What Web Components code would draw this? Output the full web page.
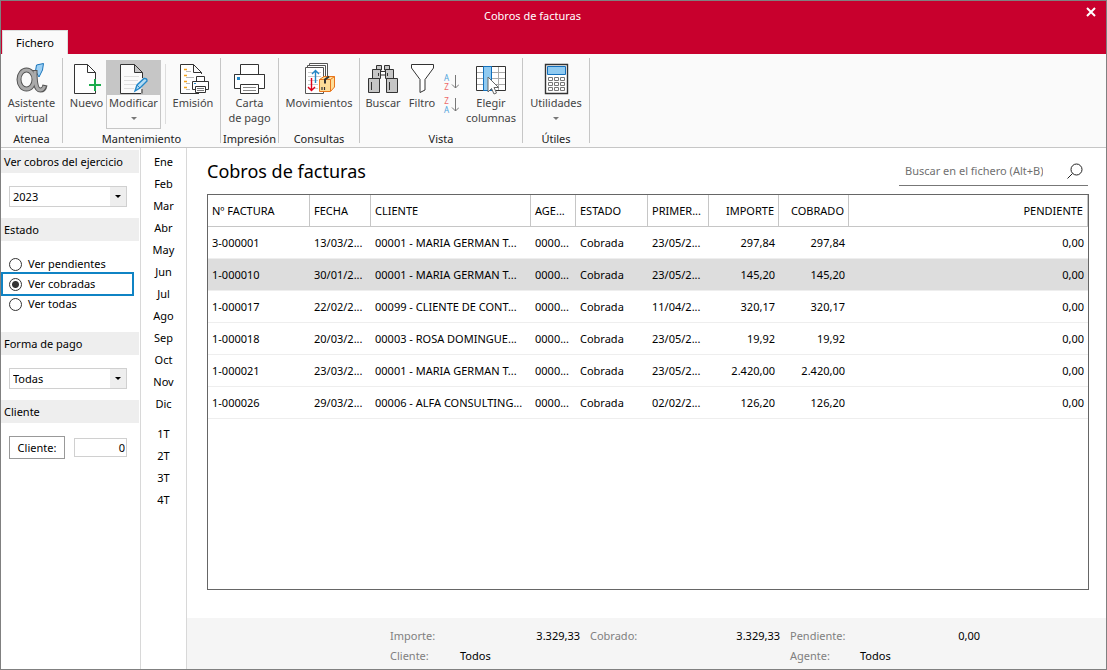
<!DOCTYPE html>
<html lang="es">
<head>
<meta charset="utf-8">
<title>Cobros de facturas</title>
<style>
  html, body { margin: 0; min-height: 100%; }
  body { font: 11px/16px "Noto Sans", "Open Sans", sans-serif; color: #000; background: #fff; }
</style>
</head>
<body>
<app-window>
  <title-bar slot="top" heading="Cobros de facturas"></title-bar>
  <tool-ribbon slot="top">
    <ribbon-group label="Atenea" style="--w: 61px">
      <ribbon-button icon="alpha" style="--w: 61px">Asistente<br>virtual</ribbon-button>
    </ribbon-group>
    <ribbon-group label="Mantenimiento" style="--w: 157px; --align: end">
      <ribbon-button icon="new" style="--w: 39px">Nuevo</ribbon-button>
      <ribbon-button icon="edit" style="--w: 55px" active menu>Modificar</ribbon-button>
      <ribbon-divider></ribbon-divider>
      <ribbon-button icon="issue" style="--w: 54px">Emisión</ribbon-button>
    </ribbon-group>
    <ribbon-group label="Impresión" style="--w: 57px">
      <ribbon-button icon="print" style="--w: 57px">Carta<br>de pago</ribbon-button>
    </ribbon-group>
    <ribbon-group label="Consultas" style="--w: 80px">
      <ribbon-button icon="moves" style="--w: 80px">Movimientos</ribbon-button>
    </ribbon-group>
    <ribbon-group label="Vista" style="--w: 162px">
      <ribbon-button icon="find" style="--w: 46px">Buscar</ribbon-button>
      <ribbon-button icon="filter" style="--w: 32px">Filtro</ribbon-button>
      <sort-buttons></sort-buttons>
      <ribbon-button icon="columns" style="--w: 54px">Elegir<br>columnas</ribbon-button>
    </ribbon-group>
    <ribbon-group label="Útiles" style="--w: 66px">
      <ribbon-button icon="calc" style="--w: 66px" menu>Utilidades</ribbon-button>
    </ribbon-group>
  </tool-ribbon>
  <filter-panel slot="body"></filter-panel>
  <period-list slot="body"></period-list>
  <invoice-view slot="body"></invoice-view>
</app-window>

<script>
const ICONS = {
  alpha: `<path d="M21.500 3L28.500 1.500L27.500 8L24 15L20.500 9Z" fill="#9cd0f5" stroke="#1a75bb"/><g fill="none"><ellipse cx="11.500" cy="17.500" rx="7.500" ry="9.500" stroke="#555" stroke-width="5"/><path d="M20 8C20 18 20 28 25.500 28C28.500 28 29.500 26 30 23" stroke="#555" stroke-width="5"/><ellipse cx="11.500" cy="17.500" rx="7.500" ry="9.500" stroke="#aaa" stroke-width="3"/><path d="M20 9C20 18 20 28 25.500 28C28.500 28 29 26 29.500 24" stroke="#aaa" stroke-width="3"/></g>`,
  new: `<path d="M25.500 18V10.500L17.500 2.500H4.500V31.500H25.500V29M17.500 2.500V10.500H25.500" fill="#fff" stroke="#333"/><path d="M25 17V29M19 23H31" stroke="#1aab4b" stroke-width="2" fill="none"/>`,
  edit: `<path d="M24 31.500H3.500V2.500H17.500L25.500 10.500V16M17.500 2.500V10.500H25.500M25 27V31.500" fill="#fafafa" stroke="#333"/><path d="M7 14.500H22M7 18.500H21M7 22.500H19M7 26.500H17" stroke="#ddd"/><path d="M18 29L20 23L27 16.500Q30 16 30 19L23 26Z" fill="#b5dcf4" stroke="#2387c8" stroke-width="1.400"/><path d="M20 23L23 26" stroke="#2387c8"/>`,
  issue: `<path d="M22 31.500H3.500V2.500H16.500L24.500 10.500V12M16.500 2.500V10.500H24.500" fill="#fff" stroke="#333"/><path d="M7 7.500H10M7 13.500H10M7 19.500H10M7 25.500H10" stroke="#f5a21b" stroke-width="1.500"/><path d="M9 9.500H14M9 15.500H17M9 21.500H13M9 27.500H13" stroke="#bbb"/><path d="M19.500 19V14.500H27.500V19M19.500 27.500H15.500V19.500H31.500V27.500H27.500" fill="#fff" stroke="#333"/><path d="M18.500 24.500H28.500V30.500H18.500Z" fill="#fff" stroke="#333"/><path d="M20 26.500H27M20 28.500H27" stroke="#777"/><path d="M17 21.500H19" stroke="#2387c8"/>`,
  print: `<path d="M7.500 12.500V2.500H25.500V12.500M7.500 26.500H1.500V12.500H31.500V26.500H25.500" fill="#fff" stroke="#333"/><path d="M1.500 12.500H31.500M7.500 22.500H25.500V31.500H7.500Z" fill="#fff" stroke="#333"/><path d="M10 25.500H23M10 28.500H23" stroke="#888"/><path d="M4 15H7V18H4Z" fill="#2387c8"/>`,
  moves: `<path d="M6.500 1.500H24.500V20H6.500Z" fill="#fff" stroke="#555"/><path d="M4.500 3.500H22.500V25H4.500Z" fill="#fff" stroke="#555"/><path d="M2.500 5.500H20.500V31.500H2.500Z" fill="#fff" stroke="#555"/><path d="M5 10.500H18M5 14.500H18M5 18.500H15M5 22.500H15M5 26.500H15" stroke="#ccc"/><path d="M12.500 21V9M9 12L12.500 8.500L16 12" fill="none" stroke="#2387c8" stroke-width="1.400"/><path d="M8.500 16V28M5 25L8.500 28.500L12 25" fill="none" stroke="#e2001a" stroke-width="1.400"/><path d="M16.500 17.500L21 14.500H31.500V25L27.500 29.500H16.500Z" fill="#fddd98" stroke="#e8751a"/><path d="M16.500 17.500H27.500V29M27.500 17.500L31.500 14.500" fill="none" stroke="#e8751a"/><path d="M22 21.500V17.500L26 14.500" stroke="#333" fill="none" stroke-width="2"/><path d="M19 25V28M21.500 25V28" stroke="#333" stroke-width="1.200"/>`,
  find: `<g fill="#c6c6c6" stroke="#333"><path d="M9.500 3.500H14.500V8H9.500ZM17.500 3.500H22.500V8H17.500Z"/><path d="M13.500 9.500H18.500V13H13.500Z" fill="#fff"/><path d="M5.500 7.500H13.500V16.500H5.500ZM18.500 7.500H26.500V16.500H18.500Z"/><path d="M1.500 16.500H12.500V30.500H1.500ZM19.500 16.500H30.500V30.500H19.500Z"/><path d="M4.500 20V28M22.500 20V28M11.500 11V14M20.500 11V14"/></g>`,
  filter: `<path d="M5.500 2.500H27.500V6L19 17.500V28L14 30.500V17.500L5.500 6Z" fill="#fff" stroke="#333"/>`,
  columns: `<path d="M1.500 4.500H30.500V28.500H1.500Z" fill="#fff" stroke="#333"/><path d="M2 10.500H30M2 16.500H30M2 22.500H30M23.500 5V28" stroke="#aaa"/><path d="M8.500 4.500H16.500V28.500H8.500Z" fill="#90caf0" stroke="#1370bd"/><path d="M13 15V30L16.500 26.500L19 32L21.500 31L19 25.500H23.500Z" fill="#fff" stroke="#666"/>`,
  calc: `<path d="M5.500 2.500H27.500V31.500H5.500Z" fill="#fff" stroke="#333" stroke-width="1.400"/><path d="M7.500 4.500H25.500V12.500H7.500Z" fill="#90caf0" stroke="#1370bd"/><path d="M8.500 15.500H12.500V18.500H8.500ZM14.500 15.500H18.500V18.500H14.500ZM20.500 15.500H24.500V18.500H20.500ZM8.500 20.500H12.500V23.500H8.500ZM14.500 20.500H18.500V23.500H14.500ZM20.500 20.500H24.500V23.500H20.500ZM8.500 25.500H12.500V28.500H8.500ZM14.500 25.500H18.500V28.500H14.500ZM20.500 25.500H24.500V28.500H20.500Z" fill="#fff" stroke="#777"/>`
};

const define = (name, render) => customElements.define(name, class extends HTMLElement {
  connectedCallback() {
    if (this.shadowRoot) return;
    this.attachShadow({ mode: "open" }).innerHTML =
      `<style>*{box-sizing:border-box}button,input,select{font:inherit;color:inherit;margin:0;border-radius:0}</style>` + render(this);
  }
});

define("app-window", () => `
  <style>
    :host { display: flex; flex-direction: column; box-sizing: border-box; min-height: 100vh; border: 1px solid #808080; }
    .body { display: flex; flex: 1; }
  </style>
  <slot name="top"></slot>
  <div class="body"><slot name="body"></slot></div>`);

define("title-bar", el => `
  <style>
    :host { display: grid; grid-template-rows: 29px 24px; background: #c8002d; color: #fff; }
    .bar { display: grid; grid-template-columns: 40px 1fr 82px; }
    h1 { grid-column: 2; margin: 0; font-size: 11px; font-weight: 400; line-height: 30px; text-align: center; }
    .close { justify-self: end; width: 30px; height: 22px; padding: 0; border: 0; background: none; }
    svg { display: block; margin: auto; }
    nav { display: flex; padding-left: 1px; }
    .tab { width: 66px; padding: 0; border: 1px solid #ddd; border-bottom: 0; background: #fafafa; color: #000; line-height: 24px; text-align: center; }
  </style>
  <div class="bar">
    <h1>${el.getAttribute("heading")}</h1>
    <button class="close" aria-label="Cerrar"><svg width="10" height="10"><path d="M1 1L9 9M9 1L1 9" stroke="#fff" stroke-width="2"/></svg></button>
  </div>
  <nav><button class="tab">Fichero</button></nav>`);

define("tool-ribbon", () => `
  <style>:host { display: flex; height: 94px; box-sizing: border-box; padding: 4px 0; background: #fafafa; border-bottom: 1px solid #c6c6c6; }</style>
  <slot></slot>`);

define("ribbon-group", el => `
  <style>
    :host { display: grid; grid-template-rows: 1fr 14px; box-sizing: content-box; width: var(--w); border-right: 1px solid #c6c6c6; }
    .items { display: flex; justify-content: var(--align, start); padding-top: 2px; min-height: 0; }
    .label { text-align: center; line-height: 20px; color: #222; white-space: nowrap; }
  </style>
  <div class="items"><slot></slot></div>
  <div class="label">${el.getAttribute("label")}</div>`);

define("ribbon-divider", () => `
  <style>:host { display: block; width: 1px; height: 60px; margin: 4px 0 0 4px; background: #ddd; }</style>`);

define("ribbon-button", el => `
  <style>
    :host { display: block; width: var(--w); flex: none; color: #444; }
    button { display: flex; flex-direction: column; align-items: center; width: 100%; height: 69px; padding: 0; border: 1px solid transparent; background: none; line-height: 15px; white-space: nowrap; }
    .pic { display: flex; justify-content: center; align-items: end; width: 100%; height: 34px; flex: none; }
    :host([active]) button { border-color: #c6c6c6; }
    :host([active]) .pic { background: #c6c6c6; }
    svg { flex: none; display: block; }
    .arrow { margin-top: 7px; border: 3px solid transparent; border-top-color: #777; }
  </style>
  <button>
    <span class="pic"><svg width="33" height="33" viewBox="0 0 33 33">${ICONS[el.getAttribute("icon")]}</svg></span>
    <span><slot></slot></span>
    ${el.hasAttribute("menu") ? `<span class="arrow"></span>` : ""}
  </button>`);

const sortButton = (label, a, b, colorA, colorB) => `
  <button aria-label="${label}">
    <span><i style="color:${colorA}">${a}</i><i style="color:${colorB}">${b}</i></span>
    <svg width="8" height="16" viewBox="0 0 8 16"><path d="M4.500 1V14M1 10.500L4.500 14L8 10.500" fill="none" stroke="#777"/></svg>
  </button>`;
define("sort-buttons", () => `
  <style>
    :host { display: flex; flex-direction: column; gap: 3px; width: 26px; padding: 12px 2px 0 2px; align-items: center; box-sizing: border-box; }
    button { display: flex; align-items: center; gap: 1px; padding: 0; border: 0; background: none; height: 20px; }
    span { display: grid; grid-template-rows: 9px 9px; width: 7px; justify-items: center; }
    i { display: block; font-size: 8px; line-height: 9px; font-style: normal; }
  </style>
  ${sortButton("Orden ascendente", "A", "Z", "#4fa3dc", "#ee6b6b")}
  ${sortButton("Orden descendente", "Z", "A", "#ee6b6b", "#4fa3dc")}`);

define("drop-down", el => `
  <style>
    :host { display: grid; grid-template-columns: 1fr 16px; width: 118px; height: 21px; box-sizing: border-box; border: 1px solid #d0d0d0; background: #fff; }
    select { grid-area: 1 / 1 / 2 / 3; appearance: none; border: 0; padding: 0 0 0 3px; background: none; outline: none; }
    i { grid-area: 1 / 2; display: grid; place-items: center; background: #eee; pointer-events: none; }
    i::after { content: ""; border: 3px solid transparent; border-top-color: #000; margin-top: 3px; }
  </style>
  <select aria-label="${el.getAttribute("label")}"><option>${el.getAttribute("value")}</option></select><i></i>`);

define("panel-section", el => `
  <style>
    :host { display: block; }
    h2 { margin: 0; padding-left: 3px; height: 23px; line-height: 24px; font-size: 11px; font-weight: 400; background: #eee; }
    .content { padding: 13px 0 0 8px; }
  </style>
  <h2>${el.getAttribute("heading")}</h2>
  <div class="content"><slot></slot></div>`);

define("filter-panel", () => `
  <style>
    :host { display: flex; flex-direction: column; width: 140px; flex: none; box-sizing: border-box; padding: 2px 1px 0 0; border-right: 1px solid #d8d8d8; }
    panel-section { min-height: 68px; }
    panel-section.state { min-height: 114px; }
    .radios { display: grid; margin-left: -8px; }
    label { display: flex; align-items: center; gap: 6px; height: 20px; padding-left: 8px; }
    label.current { width: 133px; height: 24px; margin: -2px 0; padding-left: 6px; border: 2px solid #0f83c4; }
    input[type=radio] { appearance: none; width: 13px; height: 13px; border: 1px solid #333; border-radius: 50%; background: #fff; }
    input[type=radio]:checked { background: radial-gradient(circle, #333 0 3px, #fff 4px); }
    .client { display: flex; gap: 9px; align-items: center; }
    .client button { width: 56px; height: 23px; padding: 0; border: 1px solid #999; background: #fff; }
    .client input { width: 53px; height: 19px; padding: 0 1px; border: 1px solid #d0d0d0; text-align: right; }
  </style>
  <panel-section heading="Ver cobros del ejercicio"><drop-down label="Ejercicio" value="2023"></drop-down></panel-section>
  <panel-section class="state" heading="Estado">
    <div class="radios">
      <label><input type="radio" name="estado">Ver pendientes</label>
      <label class="current"><input type="radio" name="estado" checked>Ver cobradas</label>
      <label><input type="radio" name="estado">Ver todas</label>
    </div>
  </panel-section>
  <panel-section heading="Forma de pago"><drop-down label="Forma de pago" value="Todas"></drop-down></panel-section>
  <panel-section heading="Cliente"><div class="client"><button>Cliente:</button><input aria-label="Cliente" value="0"></div></panel-section>`);

define("period-list", () => `
  <style>
    :host { display: flex; flex-direction: column; gap: 8px; width: 46px; flex: none; box-sizing: border-box; padding-top: 3px; border-right: 1px solid #d8d8d8; }
    button { display: block; width: 100%; height: 22px; padding: 0; border: 0; background: none; text-align: center; }
  </style>
  <div>${"Ene Feb Mar Abr May Jun Jul Ago Sep Oct Nov Dic".split(" ").map(m => `<button>${m}</button>`).join("")}</div>
  <div>${"1T 2T 3T 4T".split(" ").map(m => `<button>${m}</button>`).join("")}</div>`);

define("invoice-view", () => `
  <style>
    :host { display: flex; flex-direction: column; flex: 1; min-width: 0; }
    header { display: flex; justify-content: space-between; align-items: end; padding: 6px 18px 0 20px; height: 38px; }
    h2 { margin: 0; font-size: 18px; line-height: 30px; font-weight: 400; }
    .search { display: flex; align-items: center; justify-content: space-between; width: 189px; height: 30px; padding: 0 5px 0 6px; border-bottom: 1px solid #777; }
    .search input { width: 150px; padding: 0; border: 0; outline: 0; background: none; }
    .search input::placeholder { color: #707070; opacity: 1; }
    invoice-table { flex: 1; margin: 8px 17px 28px 20px; }
  </style>
  <header>
    <h2>Cobros de facturas</h2>
    <div class="search"><input type="search" placeholder="Buscar en el fichero (Alt+B)" aria-label="Buscar en el fichero">
      <svg width="16" height="16" viewBox="0 0 16 16" fill="none" stroke="#222"><circle cx="9.500" cy="6.500" r="5.500"/><path d="M5.500 10.500L0.500 15.500"/></svg></div>
  </header>
  <invoice-table></invoice-table>
  <totals-bar></totals-bar>`);

const ROWS = [
  ["3-000001", "13/03/2...", "00001 - MARIA GERMAN T...", "23/05/2...", "297,84"],
  ["1-000010", "30/01/2...", "00001 - MARIA GERMAN T...", "23/05/2...", "145,20"],
  ["1-000017", "22/02/2...", "00099 - CLIENTE DE CONT...", "11/04/2...", "320,17"],
  ["1-000018", "20/03/2...", "00003 - ROSA DOMINGUE...", "23/05/2...", "19,92"],
  ["1-000021", "23/03/2...", "00001 - MARIA GERMAN T...", "23/05/2...", "2.420,00"],
  ["1-000026", "29/03/2...", "00006 - ALFA CONSULTING...", "02/02/2...", "126,20"]
];
define("invoice-table", () => `
  <style>
    :host { display: block; border: 1px solid #666; background: #fff; box-sizing: border-box; }
    table { width: 100%; border-collapse: separate; border-spacing: 0; table-layout: fixed; }
    th, td { height: 32px; padding: 0 4px; font-weight: 400; text-align: left; white-space: nowrap; overflow: hidden; }
    th { border-right: 1px solid #c6c6c6; border-bottom: 1px solid #c6c6c6; }
    td { border-bottom: 1px solid #eee; }
    :is(th, td):nth-child(n+7) { text-align: right; }
    .selected td { background: #ddd; }
  </style>
  <table>
    <colgroup>${[102, 61, 160, 45, 72, 61, 70, 70].map(w => `<col style="width:${w}px">`).join("")}<col></colgroup>
    <thead><tr>${["Nº FACTURA", "FECHA", "CLIENTE", "AGE...", "ESTADO", "PRIMER...", "IMPORTE", "COBRADO", "PENDIENTE"].map(h => `<th>${h}</th>`).join("")}</tr></thead>
    <tbody>${ROWS.map(([n, f, c, p, i], k) => `<tr${k === 1 ? ` class="selected"` : ""}>${[n, f, c, "0000...", "Cobrada", p, i, i, "0,00"].map(v => `<td>${v}</td>`).join("")}</tr>`).join("")}</tbody>
  </table>`);

define("totals-bar", () => `
  <style>
    :host { display: grid; grid-template-columns: repeat(3, 190px); grid-auto-rows: 20px; column-gap: 10px; box-sizing: border-box; height: 51px; padding: 8px 0 0 203px; background: #f5f5f5; line-height: 20px; }
    div { display: flex; justify-content: space-between; }
    .text { justify-content: start; }
    .text span { width: 70px; }
    .agent { grid-column: 3; }
    span { color: #808080; }
    b { font-weight: 400; }
  </style>
  <div><span>Importe:</span><b>3.329,33</b></div>
  <div><span>Cobrado:</span><b>3.329,33</b></div>
  <div><span>Pendiente:</span><b>0,00</b></div>
  <div class="text"><span>Cliente:</span>Todos</div>
  <div class="text agent"><span>Agente:</span>Todos</div>`);
</script>
</body>
</html>
